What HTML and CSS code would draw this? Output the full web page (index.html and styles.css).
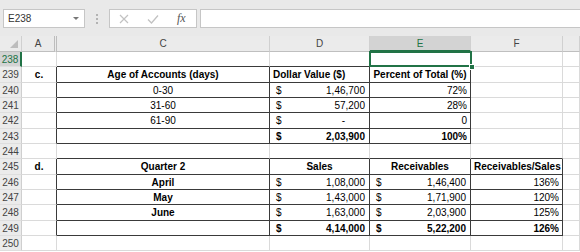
FILE: index.html
```html
<!DOCTYPE html>
<html>
<head>
<meta charset="utf-8">
<title>Aging schedule</title>
<link rel="stylesheet" href="styles.css">
</head>
<body>
	<!-- formula bar -->
	<div class="bar">
		<div class="namebox"><span>E238</span><span class="arrow"></span></div>
		<div class="grip"></div>
		<div class="fxbtns">
			<svg class="ico-x" width="10" height="10" viewBox="0 0 10 10"><path d="M1 1L9 9M9 1L1 9" stroke="#c2c2c2" stroke-width="1.2" fill="none"/></svg>
			<svg class="ico-ok" width="12" height="10" viewBox="0 0 12 10"><path d="M1 5.5L4.5 9L11 1.5" stroke="#c2c2c2" stroke-width="1.3" fill="none"/></svg>
			<span class="fx">fx</span>
		</div>
		<div class="formula"></div>
	</div>

	<!-- sheet -->
	<div class="sheet">
		<div class="row">
			<div class="h corner"><svg width="8" height="8" viewBox="0 0 8 8"><polygon points="8,0 8,8 0,8" fill="#bdbdbd"/></svg></div>
			<div class="h hid">A</div>
			<div class="h">C</div>
			<div class="h">D</div>
			<div class="h on">E</div>
			<div class="h">F</div>
			<div class="h"></div>
		</div>
		<div class="row">
			<div class="rh on">238</div>
			<div class="c"></div>
			<div class="c bb"></div>
			<div class="c bb"></div>
			<div class="c bb sel"><span class="handle"></span></div>
			<div class="c"></div>
			<div class="c"></div>
		</div>
		<div class="row">
			<div class="rh">239</div>
			<div class="c br b ctr">c.</div>
			<div class="c br bb b ctr">Age of Accounts (days)</div>
			<div class="c br bb b">Dollar Value ($)</div>
			<div class="c br bb b ctr">Percent of Total (%)</div>
			<div class="c"></div>
			<div class="c"></div>
		</div>
		<div class="row">
			<div class="rh">240</div>
			<div class="c br"></div>
			<div class="c br bb ctr">0-30</div>
			<div class="c br bb acc"><span>$</span><span>1,46,700</span></div>
			<div class="c br bb rt">72%</div>
			<div class="c"></div>
			<div class="c"></div>
		</div>
		<div class="row">
			<div class="rh">241</div>
			<div class="c br"></div>
			<div class="c br bb ctr">31-60</div>
			<div class="c br bb acc"><span>$</span><span>57,200</span></div>
			<div class="c br bb rt">28%</div>
			<div class="c"></div>
			<div class="c"></div>
		</div>
		<div class="row">
			<div class="rh">242</div>
			<div class="c br"></div>
			<div class="c br bb ctr">61-90</div>
			<div class="c br bb acc"><span>$</span><span class="dash">-</span></div>
			<div class="c br bb rt">0</div>
			<div class="c"></div>
			<div class="c"></div>
		</div>
		<div class="row">
			<div class="rh">243</div>
			<div class="c br"></div>
			<div class="c br bb"></div>
			<div class="c br bb acc b"><span>$</span><span>2,03,900</span></div>
			<div class="c br bb rt b">100%</div>
			<div class="c"></div>
			<div class="c"></div>
		</div>
		<div class="row">
			<div class="rh">244</div>
			<div class="c"></div>
			<div class="c bb"></div>
			<div class="c bb"></div>
			<div class="c bb"></div>
			<div class="c bb"></div>
			<div class="c"></div>
		</div>
		<div class="row">
			<div class="rh">245</div>
			<div class="c br b ctr">d.</div>
			<div class="c br bb b ctr">Quarter 2</div>
			<div class="c br bb b ctr">Sales</div>
			<div class="c br bb b ctr">Receivables</div>
			<div class="c br bb b ctr">Receivables/Sales</div>
			<div class="c"></div>
		</div>
		<div class="row">
			<div class="rh">246</div>
			<div class="c br"></div>
			<div class="c br bb b ctr">April</div>
			<div class="c br bb acc"><span>$</span><span>1,08,000</span></div>
			<div class="c br bb acc"><span>$</span><span>1,46,400</span></div>
			<div class="c br bb rt">136%</div>
			<div class="c"></div>
		</div>
		<div class="row">
			<div class="rh">247</div>
			<div class="c br"></div>
			<div class="c br bb b ctr">May</div>
			<div class="c br bb acc"><span>$</span><span>1,43,000</span></div>
			<div class="c br bb acc"><span>$</span><span>1,71,900</span></div>
			<div class="c br bb rt">120%</div>
			<div class="c"></div>
		</div>
		<div class="row">
			<div class="rh">248</div>
			<div class="c br"></div>
			<div class="c br bb b ctr">June</div>
			<div class="c br bb acc"><span>$</span><span>1,63,000</span></div>
			<div class="c br bb acc"><span>$</span><span>2,03,900</span></div>
			<div class="c br bb rt">125%</div>
			<div class="c"></div>
		</div>
		<div class="row">
			<div class="rh">249</div>
			<div class="c br"></div>
			<div class="c br bb"></div>
			<div class="c br bb acc b"><span>$</span><span>4,14,000</span></div>
			<div class="c br bb acc b"><span>$</span><span>5,22,200</span></div>
			<div class="c br bb rt b">126%</div>
			<div class="c"></div>
		</div>
		<div class="row">
			<div class="rh">250</div>
			<div class="c"></div>
			<div class="c"></div>
			<div class="c"></div>
			<div class="c"></div>
			<div class="c"></div>
			<div class="c"></div>
		</div>
	</div>
</body>
</html>
```

FILE: styles.css
```css
* {
	box-sizing: border-box;
}
html, body {
	margin: 0;
	overflow: hidden;
}
body {
	font: 10px "Liberation Sans", Arial, sans-serif;
	color: #000;
	background: #fff;
}

/* formula bar */
.bar {
	height: 36px;
	background: #e9e9e9;
	display: flex;
	align-items: flex-start;
	padding: 9px 0 0 3px;
}
.namebox {
	width: 82px;
	height: 19px;
	background: #fff;
	border: 1px solid #c6c6c6;
	display: flex;
	align-items: center;
	justify-content: space-between;
	padding: 0 5px 0 4px;
	color: #333;
}
.namebox .arrow {
	width: 0;
	height: 0;
	border-left: 3px solid transparent;
	border-right: 3px solid transparent;
	border-top: 3px solid #777;
}
.grip {
	width: 2px;
	height: 10px;
	margin: 5px 11px 0;
	background: repeating-linear-gradient(#b3b3b3 0 2px, transparent 2px 4px);
}
.fxbtns {
	width: 88px;
	height: 19px;
	background: #fff;
	border: 1px solid #c6c6c6;
	display: flex;
	align-items: center;
	padding-left: 9px;
}
.fxbtns .ico-ok {
	margin-left: 18px;
}
.fxbtns .fx {
	margin-left: 18px;
	font: italic 12px "Liberation Serif", serif;
	color: #555;
}
.formula {
	flex: 1;
	height: 19px;
	margin-left: 3px;
	background: #fff;
	border: 1px solid #c6c6c6;
	border-right: none;
}

/* sheet grid */
.sheet {
	display: grid;
	grid-template-columns: 22px 35px 213px 100px 101px 92px 1fr;
	grid-template-rows: 16px;
	grid-auto-rows: 15.33px;
}
.row {
	display: contents;
}
.h {
	background: #ebebeb;
	border-right: 1px solid #d0d0d0;
	border-bottom: 1px solid #bfbfbf;
	text-align: center;
	line-height: 16px;
	color: #444;
}
.h.hid {
	border-right: 3px double #bdbdbd;
}
.h.on {
	background: #d3d3d3;
	color: #217346;
	border-bottom: 2px solid #217346;
}
.corner {
	display: flex;
	justify-content: flex-end;
	align-items: flex-end;
	padding: 0 3px 3px 0;
}
.corner svg {
	display: block;
}
.rh {
	background: #ebebeb;
	border-right: 1px solid #cfcfcf;
	border-bottom: 1px solid #dedede;
	text-align: center;
	line-height: 15px;
	color: #444;
}
.rh.on {
	background: #d3d3d3;
	color: #217346;
	border-right: 2px solid #217346;
}
.c {
	border-right: 1px solid #dadada;
	border-bottom: 1px solid #dadada;
	padding: 0 3px;
	line-height: 15px;
	white-space: nowrap;
}
.c.br {
	border-right-color: #3a3a3a;
}
.c.bb {
	border-bottom-color: #3a3a3a;
}
.b {
	font-weight: bold;
}
.ctr {
	text-align: center;
}
.rt {
	text-align: right;
}
.acc {
	display: flex;
	justify-content: space-between;
	padding: 0 4px 0 6px;
}
.acc .dash {
	margin-right: 20px;
}

/* active cell */
.sel {
	position: relative;
}
.sel::after {
	content: '';
	position: absolute;
	left: -1px;
	top: -1px;
	right: -2px;
	bottom: -1px;
	border: 2px solid #217346;
}
.sel .handle {
	position: absolute;
	right: -5px;
	bottom: -4px;
	width: 6px;
	height: 6px;
	background: #217346;
	border: 1px solid #fff;
	z-index: 1;
}
```
